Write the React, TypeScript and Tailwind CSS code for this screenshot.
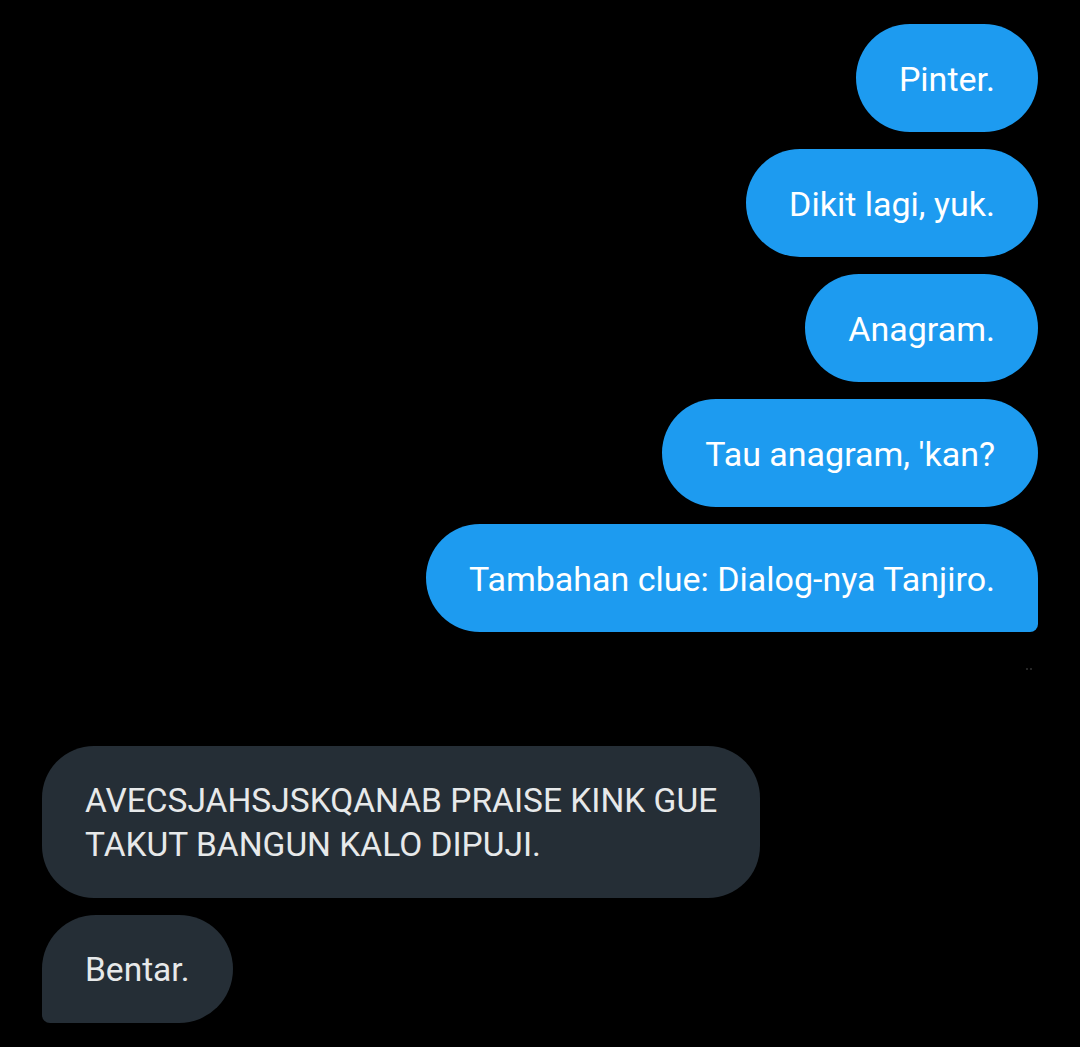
import React from "react";

const font = { fontFamily: "Roboto, 'Noto Sans', sans-serif" };

function Out({ text, last }: { text: string; last?: boolean }) {
  return (
    <div className="flex justify-end">
      <div
        className={`bg-[#1d9bf0] text-white text-[34px] leading-[44px] px-[43px] pt-[33px] pb-[31px] ${
          last ? "rounded-[54px] rounded-br-[8px]" : "rounded-[54px]"
        }`}
      >
        {text}
      </div>
    </div>
  );
}

export default function App() {
  return (
    <div className="w-[1080px] h-[1047px] bg-black overflow-hidden" style={font}>
      <div className="pt-[24px] pr-[42px] pl-[42px] flex flex-col gap-[17px]">
        <Out text="Pinter." />
        <Out text="Dikit lagi, yuk." />
        <Out text="Anagram." />
        <Out text="Tau anagram, 'kan?" />
        <Out text="Tambahan clue: Dialog-nya Tanjiro." last />
      </div>
      <div className="flex justify-end pr-[48px] pt-[36px] h-[114px]">
        <div className="flex gap-[2px]">
          <span className="w-[2px] h-[2px] bg-[#333] rounded-full" />
          <span className="w-[2px] h-[2px] bg-[#333] rounded-full" />
        </div>
      </div>
      <div className="pl-[42px] flex flex-col gap-[17px] items-start">
        <div className="bg-[#252e36] text-[#e7e9ea] text-[33.5px] leading-[44px] px-[43px] pt-[33px] pb-[31px] rounded-[52px]">
          AVECSJAHSJSKQANAB PRAISE KINK GUE
          <br />
          TAKUT BANGUN KALO DIPUJI.
        </div>
        <div className="bg-[#252e36] text-[#e7e9ea] text-[33.5px] leading-[44px] px-[43px] pt-[33px] pb-[31px] rounded-[54px] rounded-bl-[8px]">
          Bentar.
        </div>
      </div>
    </div>
  );
}
